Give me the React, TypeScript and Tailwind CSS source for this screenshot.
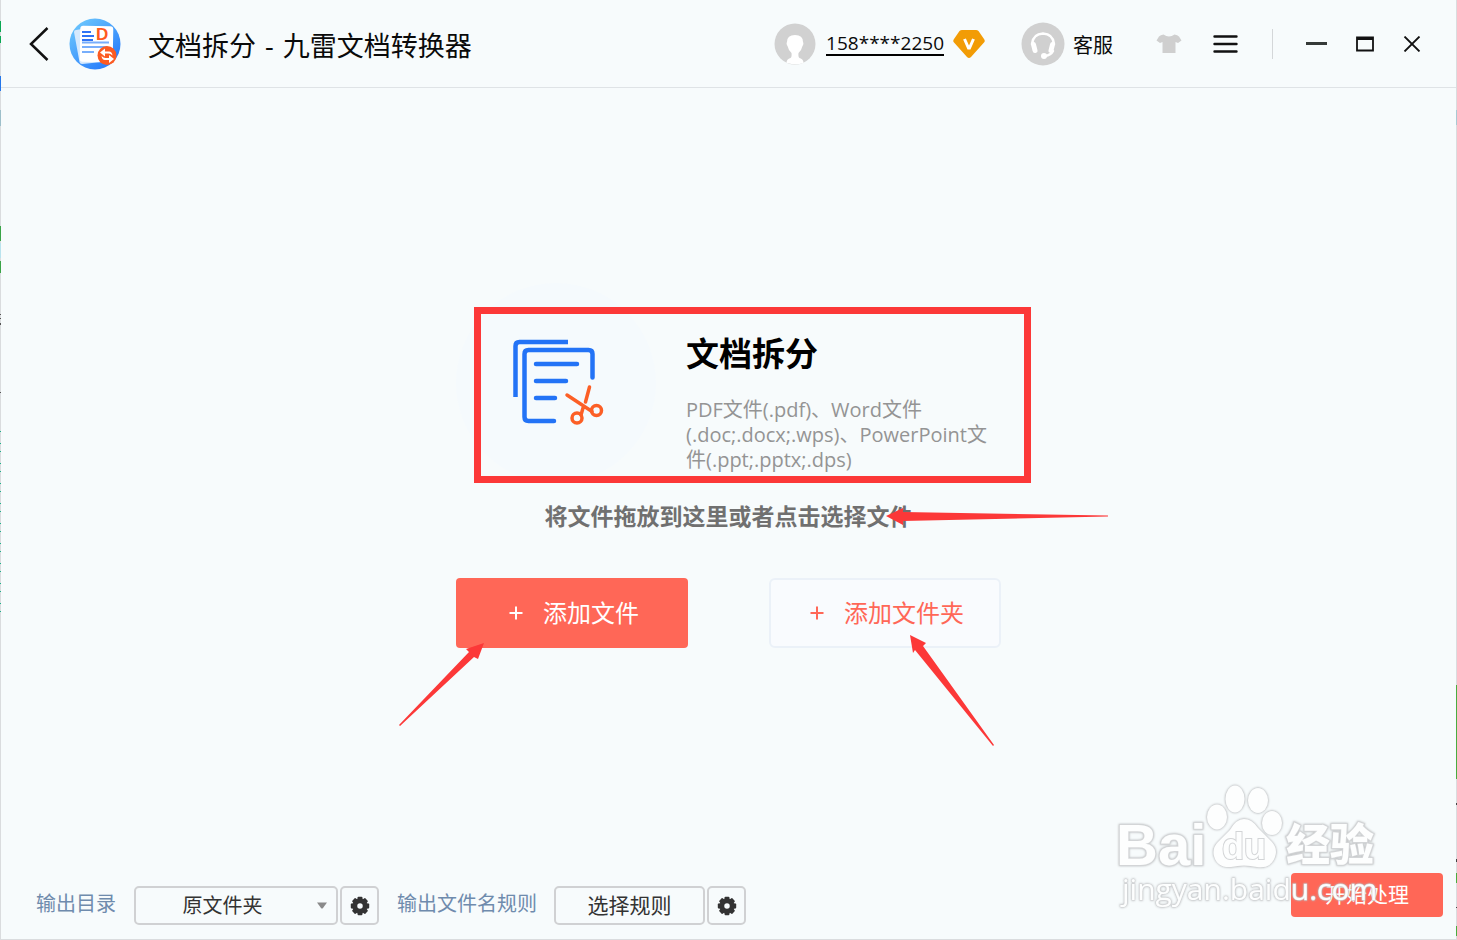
import { useState } from 'react';
import type { ReactNode } from 'react';

const dirs = ['原文件夹', '自定义'];

function AppLogo() {
  return (
    <svg width="52" height="52" viewBox="0 0 52 52" aria-hidden="true">
      <defs>
        <linearGradient id="logoBg" x1="0" y1="0" x2="0.8" y2="1">
          <stop offset="0" stopColor="#74cffd" />
          <stop offset="1" stopColor="#2478fb" />
        </linearGradient>
      </defs>
      <circle cx="26" cy="26" r="25.500" fill="url(#logoBg)" />
      <path d="M5 14q0-2 2-2l6-1 20 33-20 2q-2 0-2.500-2z" fill="#d6e9fd" />
      <rect x="11" y="8" width="33" height="36" rx="3" fill="#fff" transform="rotate(1 27 26)" />
      <g fill="none" stroke="#2f74f5" strokeWidth="2.200">
        <path d="M13 14h9M13 18h12M13 22h11" />
        <path d="M13 24.500h27M13 29h25M13 34h12" stroke="#78aefb" />
      </g>
      <text x="27" y="22" fontSize="17" fontWeight="bold" fill="#ff5a1f" className="font-['Liberation_Sans']">D</text>
      <circle cx="38" cy="37.500" r="9.500" fill="#fc5b23" />
      <g fill="#fff">
        <path d="M31 34.500l5-4v3h4q3 0 3.500 4-2-2-4-2h-3.500v3z" />
        <path d="M45 41l-5 4v-3h-4q-3 0-3.500-4 2 2 4 2h3.500v-3z" />
      </g>
    </svg>
  );
}

function DocIcon() {
  return (
    <svg width="92" height="88" viewBox="0 0 92 88" fill="none" aria-hidden="true">
      <g stroke="#2373f6" strokeWidth="4.500">
        <path d="M3.500 58V7q0-4 4-4H56" />
        <path d="M80.500 38.500V15q0-4-4-4h-60q-4 0-4 4v63q0 4 4 4H42" strokeLinecap="round" />
        <path d="M24 25h41M24 42h30M24 59h19" strokeLinecap="round" />
      </g>
      <g stroke="#fc5f26" strokeWidth="3.500" strokeLinecap="round">
        <path d="M55 56l25 16.500M77.500 48l-4 15M71 69l-2 7" />
        <circle cx="84.500" cy="71.500" r="5" />
        <circle cx="65" cy="79" r="5" />
      </g>
    </svg>
  );
}

function Gear() {
  const teeth = [0, 45, 90, 135, 180, 225, 270, 315];
  return (
    <svg width="20" height="20" viewBox="-10 -10 20 20" fill="#333" aria-hidden="true">
      {teeth.map(a => (
        <path key={a} d="M-3-5l.6-3.600q.2-.6.800-.6h3.200q.6 0 .8.600L3-5z" transform={`rotate(${a})`} />
      ))}
      <circle r="5" fill="none" stroke="#333" strokeWidth="4.500" />
    </svg>
  );
}

function Plus() {
  return (
    <svg width="14" height="14" viewBox="0 0 14 14" stroke="currentColor" strokeWidth="2" aria-hidden="true">
      <path d="M0.500 7h13M7 0.500v13" />
    </svg>
  );
}

function IconButton({ label, children }: { label: string; children: ReactNode }) {
  return (
    <button aria-label={label} className="flex h-10 items-center justify-center">
      {children}
    </button>
  );
}

function Header() {
  return (
    <header className="flex h-[88px] shrink-0 items-center border-b border-[#dfe3e6] pl-7 pr-[35px]">
      <IconButton label="返回">
        <svg width="20" height="34" viewBox="0 0 20 34" fill="none" stroke="#111" strokeWidth="2.500">
          <path d="M18.500 1L2 17l16.500 16" />
        </svg>
      </IconButton>
      <div className="ml-5">
        <AppLogo />
      </div>
      <h1 className="ml-[27px] mt-1 whitespace-nowrap text-[27px] leading-9 text-[#0a0a0a]">
        文档拆分<span className="px-0.5"> - </span>九雷文档转换器
      </h1>

      <div className="ml-auto flex items-center">
        <svg width="42" height="42" viewBox="0 0 42 42" aria-hidden="true">
          <circle cx="21" cy="21" r="20.500" fill="#d1d1d1" />
          <path d="M12.500 40q0-4 4-5 1.500-.5 1-5-3-2.500-4-7-1.500-2-.5-4Q13 12 21 12t8 7q1 2-.5 4-1 4.500-4 7-.5 4.500 1 5 4 1 4 5-8 2.500-16 0z" fill="#fff" />
        </svg>
        <a href="#account" className="ml-[10px] border-b-2 border-black text-[19px] leading-[22px] text-[#0a0a0a]">158****2250</a>
        <svg className="ml-[9px]" width="32" height="28" viewBox="0 0 32 28" aria-hidden="true">
          <path d="M9 0h14q1.500 0 2.500 1l5.500 8q1.500 2 0 3.500L18 27q-2 2-4 0L1 12.500Q-.5 11 1 9l5.500-8Q7.500 0 9 0z" fill="#f29c06" />
          <path d="M11.500 9l4 9h1l4-9" fill="none" stroke="#fff" strokeWidth="3" />
        </svg>
        <button className="ml-9 flex items-center gap-2 text-xl text-[#0a0a0a]">
          <svg width="44" height="44" viewBox="0 0 44 44" aria-hidden="true">
            <circle cx="22" cy="22" r="21.500" fill="#d0d0d0" />
            <g fill="none" stroke="#fff" strokeLinecap="round">
              <path d="M11 22q1-10 11-10.500Q32 12 33 22M32 29q-2 4-8 5" strokeWidth="2.500" />
              <path d="M12.500 22.500l1.500 6M31.500 22.500l-1.500 6" strokeWidth="5" />
            </g>
            <circle cx="23" cy="34" r="3" fill="#fff" />
          </svg>
          <span className="mt-1">客服</span>
        </button>
        <div className="ml-[43px] flex items-center">
          <IconButton label="皮肤">
            <svg width="26" height="20" viewBox="0 0 26 20" fill="#cfcfcf">
              <path d="M7.500.500Q13 4.500 18.500.500q3 .5 4.500 2l2.500 4-3.500 2.500-2.500-1V19H6.500V8L4 9 .500 6.500l2.500-4Q4.500 1 7.500.500z" />
            </svg>
          </IconButton>
        </div>
        <div className="ml-[31px] flex items-center">
          <IconButton label="菜单">
            <svg width="25" height="18" viewBox="0 0 25 18" stroke="#111" strokeWidth="2.400" strokeLinecap="round">
              <path d="M1.500 1.500h22M1.500 9h22M1.500 16.500h22" />
            </svg>
          </IconButton>
        </div>
        <span className="ml-[34px] h-[30px] w-px bg-[#d4d7d9]" />
        <div className="ml-[33px] flex items-center gap-[29px]">
          <IconButton label="最小化">
            <svg width="21" height="3" viewBox="0 0 21 3"><path d="M0 0h21v3H0z" fill="#353a38" /></svg>
          </IconButton>
          <IconButton label="最大化">
            <svg width="18" height="16" viewBox="0 0 18 16"><path d="M1 1.500h16v13H1zM1 3h16" fill="none" stroke="#111" strokeWidth="1.800" /></svg>
          </IconButton>
          <IconButton label="关闭">
            <svg width="18" height="16" viewBox="0 0 18 16"><path d="M1.500 .500l15 15M16.500 .500l-15 15" stroke="#111" strokeWidth="1.800" /></svg>
          </IconButton>
        </div>
      </div>
    </header>
  );
}

function DropZone() {
  return (
    <main className="flex flex-1 justify-center pt-[195px]">
      <div className="relative h-fit w-[545px]">
        <section className="flex h-[200px] gap-[30px]">
          <div className="flex size-[200px] shrink-0 items-center justify-center rounded-full bg-[#f5fafd] pl-1">
            <DocIcon />
          </div>
          <div className="pt-[48px]">
            <h2 className="whitespace-nowrap text-[33px] font-bold leading-[46px] text-black">文档拆分</h2>
            <p className="mt-5 whitespace-nowrap text-xl leading-[25px] text-[#949494]">
              PDF文件(.pdf)、Word文件<br />
              (.doc;.docx;.wps)、PowerPoint文<br />
              件(.ppt;.pptx;.dps)
            </p>
          </div>
        </section>
        <p className="mt-[17px] text-center text-[23px] font-bold leading-8 text-[#707070]">将文件拖放到这里或者点击选择文件</p>
        <div className="mt-[46px] flex justify-between">
          <button className="flex h-[70px] w-[232px] items-center justify-center gap-5 rounded bg-[#ff6757] pl-1 text-2xl text-white">
            <Plus />
            添加文件
          </button>
          <button className="flex h-[70px] w-[232px] items-center justify-center gap-5 rounded-md border-2 border-[#ebf1f8] bg-[#f9fbfe] pl-1 text-2xl text-[#ff6757]">
            <Plus />
            添加文件夹
          </button>
        </div>

        <div className="pointer-events-none absolute left-[18px] top-6 h-44 w-[557px] border-7 border-[#fc3838]" />
        <svg className="pointer-events-none absolute left-0 top-0 overflow-visible" width="544" height="365" fill="#fc3838" aria-hidden="true">
          <path d="M430 233l17-8v4l205 3.500v1L447 238v4z" />
          <path d="M28 360l-18 6 3 3-70 73 1 1 74-69 4 2z" />
          <path d="M454 352l16 8-3 3 71 99-1 1-78-96-2 3z" />
        </svg>
      </div>
    </main>
  );
}

function Footer() {
  const [dir, setDir] = useState(dirs[0]);

  return (
    <footer className="flex shrink-0 justify-between pb-[14px] pl-[35px] pr-[13px] text-xl">
      <div className="mt-[13px] flex items-center">
        <label htmlFor="outDir" className="pb-[3px] text-[#6f8bad]">输出目录</label>
        <div className="relative ml-[18px]">
          <select
            id="outDir"
            value={dir}
            onChange={e => setDir(e.target.value)}
            className="h-[39px] w-[204px] appearance-none rounded-[5px] border-2 border-[#d0d1d3] pr-[27px] text-center text-[#333]"
          >
            {dirs.map(d => <option key={d}>{d}</option>)}
          </select>
          <svg className="pointer-events-none absolute right-[11px] top-4" width="10" height="7" viewBox="0 0 10 7">
            <path d="M0 .5h10L6 6q-1 1-2 0z" fill="#8a8a8a" />
          </svg>
        </div>
        <button aria-label="目录设置" className="ml-[2px] flex h-[39px] w-[39px] items-center justify-center rounded-[5px] border-2 border-[#d0d1d3]">
          <Gear />
        </button>
        <span className="ml-[18px] pb-[3px] text-[#6f8bad]">输出文件名规则</span>
        <button className="ml-[17px] h-[39px] w-[151px] rounded-[5px] border-2 border-[#d0d1d3] text-[21px] text-[#333]">选择规则</button>
        <button aria-label="规则设置" className="ml-[2px] flex h-[39px] w-[39px] items-center justify-center rounded-[5px] border-2 border-[#d0d1d3]">
          <Gear />
        </button>
      </div>
      <button className="h-11 w-[152px] self-start rounded bg-[#ff6757] text-[21px] text-white">开始处理</button>
    </footer>
  );
}

function Watermark() {
  return (
    <svg
      className="pointer-events-none absolute bottom-[23px] right-[75px] drop-shadow-[0_0_1px_#b5b7b9]"
      width="265" height="135" viewBox="0 0 265 135"
      fill="#fdfefe" stroke="#d3d5d7" strokeWidth="1" paintOrder="stroke" aria-hidden="true"
    >
      <text x="0" y="84" fontSize="58" fontWeight="bold" strokeWidth="2" className="font-['Liberation_Sans']">Bai</text>
      <ellipse cx="101" cy="36" rx="10" ry="12.500" />
      <ellipse cx="119" cy="18" rx="9.500" ry="13.500" />
      <ellipse cx="142" cy="19.500" rx="10" ry="12.500" />
      <ellipse cx="156" cy="42" rx="10" ry="12" />
      <path d="M128 38q8 0 14 9l14 14q6 7 3 15-4 12-18 10-13-3-26 0-14 1-17-11-2-8 4-14l12-12q6-11 14-11z" />
      <text x="106" y="78" fontSize="36" fontWeight="bold" strokeWidth="2" className="font-['Liberation_Sans']">du</text>
      <text x="170" y="80" fontSize="44" fontWeight="900" strokeWidth="2" className="font-['Noto_Sans_CJK_SC']">经验</text>
      <text x="6" y="119" fontSize="30" strokeWidth="1" className="font-['Open_Sans']">jingyan.baidu.com</text>
    </svg>
  );
}

// slivers of the desktop behind the window, seen along both edges
function Edges() {
  return (
    <>
      <svg className="pointer-events-none absolute -left-px top-0" width="1" height="630" aria-hidden="true">
        <path d="M0 21h1v11H0zM0 36h1v7H0z" fill="#0aa853" />
        <path d="M0 76h1v15H0z" fill="#2577ea" />
        <path d="M0 110h1v16H0z" fill="#9dbfca" />
        <path d="M0 226h1v15H0zM0 261h1v12H0z" fill="#3aa447" />
        <path d="M0 243h1v15H0z" fill="#b9e3ee" />
        <path d="M0 314h1v1H0zM0 318h1v1H0zM0 323h1v2H0zM0 392h1v1H0z" fill="#555" />
        <path d="M.5 431v190" stroke="#1bb089" strokeDasharray="1 11 1 7" />
      </svg>
      <svg className="pointer-events-none absolute -right-px top-0" width="1" height="939" aria-hidden="true">
        <path d="M0 110h1v15H0z" fill="#a9c9d3" />
        <path d="M0 685h1v94H0zM0 873h1v10H0zM0 926h1v10H0z" fill="#4aac3f" />
        <path d="M0 803h1v2H0zM0 859h1v3H0zM0 907h1v1H0z" fill="#444" />
      </svg>
    </>
  );
}

export default function App() {
  return (
    <div className="relative flex min-h-screen flex-col border-x border-b border-[#dadcde] bg-[#f7fbfc] font-['Open_Sans','Noto_Sans_CJK_SC',sans-serif]">
      <Header />
      <DropZone />
      <Footer />
      <Watermark />
      <Edges />
    </div>
  );
}
